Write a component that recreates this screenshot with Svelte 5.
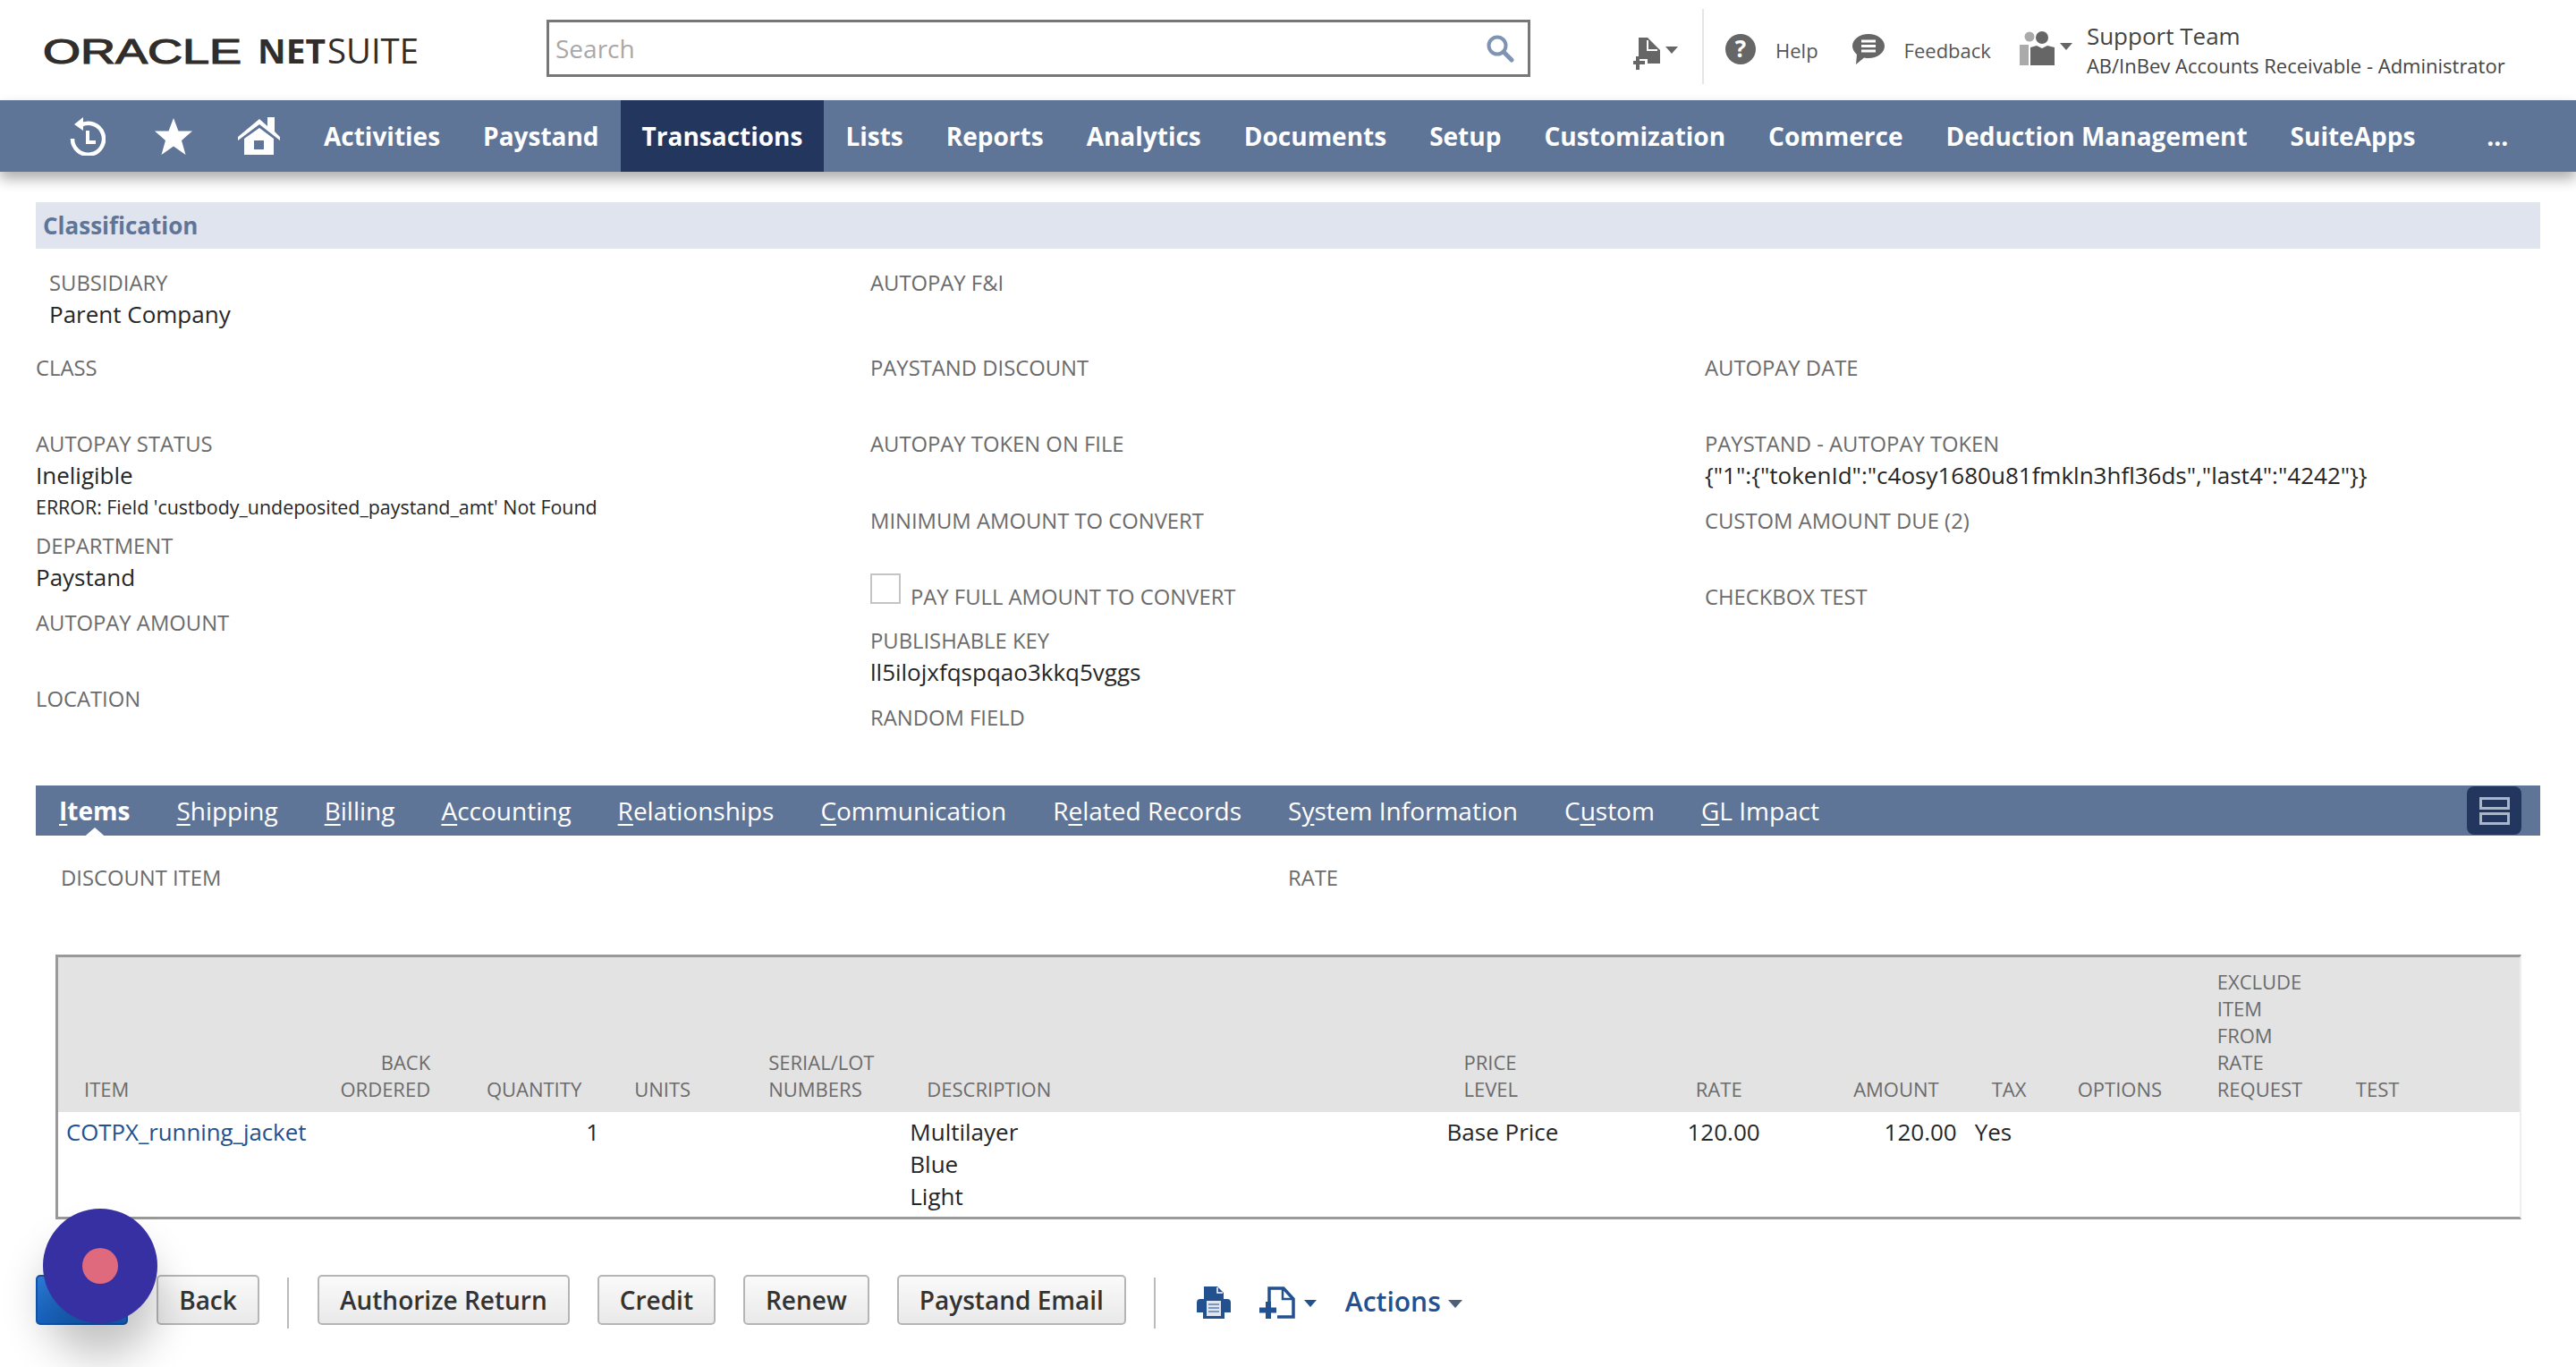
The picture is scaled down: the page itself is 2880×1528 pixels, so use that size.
<script>
  const navItems = ['Activities', 'Paystand', 'Transactions', 'Lists', 'Reports', 'Analytics', 'Documents', 'Setup', 'Customization', 'Commerce', 'Deduction Management', 'SuiteApps'];
  const tabs = [
    ['', 'I', 'tems'], ['', 'S', 'hipping'], ['', 'B', 'illing'], ['', 'A', 'ccounting'], ['', 'R', 'elationships'],
    ['', 'C', 'ommunication'], ['R', 'e', 'lated Records'], ['S', 'y', 'stem Information'], ['C', 'u', 'stom'], ['', 'G', 'L Impact']
  ];
  const cols = [
    { w: 288, lines: ['ITEM'], cell: 'COTPX_running_jacket', kind: 'link' },
    { w: 158, lines: ['BACK', 'ORDERED'], right: true },
    { w: 169, lines: ['QUANTITY'], right: true, cell: '1' },
    { w: 150, lines: ['UNITS'] },
    { w: 177, lines: ['SERIAL/LOT', 'NUMBERS'] },
    { w: 600, lines: ['DESCRIPTION'], cellLines: ['Multilayer', 'Blue', 'Light'] },
    { w: 150, lines: ['PRICE', 'LEVEL'], cell: 'Base Price' },
    { w: 220, lines: ['RATE'], right: true, cell: '120.00' },
    { w: 220, lines: ['AMOUNT'], right: true, cell: '120.00' },
    { w: 96, lines: ['TAX'], cell: 'Yes' },
    { w: 156, lines: ['OPTIONS'] },
    { w: 155, lines: ['EXCLUDE', 'ITEM', 'FROM', 'RATE', 'REQUEST'] },
    { w: 212, lines: ['TEST'] }
  ];
</script>

<div class="page">
  <header class="top">
    <div class="logo" aria-label="Oracle NetSuite">
      <svg width="420" height="30" viewBox="0 0 420 30">
        <text class="lg-oracle" x="0" y="28" textLength="222" lengthAdjust="spacingAndGlyphs">ORACLE</text>
        <text class="lg-net" x="240" y="28" textLength="76" lengthAdjust="spacingAndGlyphs">NET</text>
        <text class="lg-suite" x="318" y="28" textLength="102" lengthAdjust="spacingAndGlyphs">SUITE</text>
      </svg>
    </div>
    <div class="search">
      <span>Search</span>
      <svg width="32" height="32" viewBox="0 0 32 32"><circle cx="13" cy="13" r="9.500" fill="none" stroke="#7f93b2" stroke-width="4"/><path d="M20 20l9 9" stroke="#7f93b2" stroke-width="5" stroke-linecap="round"/></svg>
    </div>
    <div class="tools">
      <div class="shortcut">
        <svg width="32" height="36" viewBox="0 0 32 36"><path d="M6 0h10l14 14v15H16v-5H6z" fill="#666"/><path d="M16 3v11h11" fill="none" stroke="#fff" stroke-width="2"/><path d="M5 21v15M0 28h13" stroke="#666" stroke-width="4" /></svg>
        <i class="caret gray"></i>
      </div>
      <div class="vline"></div>
      <svg class="help-ic" width="34" height="34" viewBox="0 0 34 34"><ellipse cx="17" cy="17" rx="17" ry="17" fill="#666"/><text x="17" y="26" text-anchor="middle" class="qm">?</text></svg>
      <span class="tool-txt help">Help</span>
      <svg class="fb-ic" width="36" height="34" viewBox="0 0 36 34"><path d="M18 0c10 0 18 6 18 13.500S28 27 18 27c-2 0-3 0-5 -.5L4 34l1-11C2 20 0 17 0 13.500 0 6 8 0 18 0z" fill="#666"/><path d="M10 8h16M10 13.500h16M10 19h16" stroke="#fff" stroke-width="3"/></svg>
      <span class="tool-txt fb">Feedback</span>
      <svg class="users" width="42" height="38" viewBox="0 0 42 38"><circle cx="11" cy="6" r="5.500" fill="#aaa"/><path d="M0 15h10v23H0z" fill="#aaa"/><circle cx="25" cy="7" r="7" fill="#666"/><path d="M12 18l7-2 6 3 6-3 8 2v20H12z" fill="#666"/></svg>
      <i class="caret gray uc"></i>
      <div class="who">
        <div class="who-a">Support Team</div>
        <div class="who-b">AB/InBev Accounts Receivable - Administrator</div>
      </div>
    </div>
  </header>

  <nav class="nav">
    <svg class="ic-clock" width="40" height="43" viewBox="0 0 40 43"><path d="M12 9A17.500 17.500 0 1 1 3 24" fill="none" stroke="#fff" stroke-width="4.500"/><path d="M5 8l10-8v15z" fill="#fff"/><path d="M20 15v13h9" fill="none" stroke="#fff" stroke-width="4"/></svg>
    <svg class="ic-star" width="42" height="41" viewBox="0 0 42 41"><path d="M21 0l5.500 14.500H42L30 25l4.500 16L21 31.500 7.500 41 12 25 0 14.500h15.500z" fill="#fff"/></svg>
    <svg class="ic-home" width="47" height="42" viewBox="0 0 47 42"><path d="M0 22L24 2l9 8V0h8v16l6 6v4L24 8 0 26z" fill="#fff"/><path d="M7 42V24L24 12l16 12v18z" fill="#fff"/><path d="M18 26h11v10H18z" fill="#5f7598"/></svg>
    {#each navItems as item}
      <a class="nav-item" class:active={item === 'Transactions'} href="#top">{item}</a>
    {/each}
    <a class="nav-item more" href="#top">...</a>
  </nav>

  <main class="main">
    <div class="band">Classification</div>
    <div class="fields">
      <div class="col">
        <div class="f first inset"><div class="l">SUBSIDIARY</div><div class="v">Parent Company</div></div>
        <div class="f"><div class="l">CLASS</div></div>
        <div class="f err-f">
          <div class="l">AUTOPAY STATUS</div><div class="v">Ineligible</div>
          <div class="err">ERROR: Field 'custbody_undeposited_paystand_amt' Not Found</div>
        </div>
        <div class="f tall"><div class="l">DEPARTMENT</div><div class="v">Paystand</div></div>
        <div class="f"><div class="l">AUTOPAY AMOUNT</div></div>
        <div class="f end"><div class="l">LOCATION</div></div>
      </div>
      <div class="col">
        <div class="f first"><div class="l">AUTOPAY F&amp;I</div></div>
        <div class="f"><div class="l">PAYSTAND DISCOUNT</div></div>
        <div class="f tall"><div class="l">AUTOPAY TOKEN ON FILE</div></div>
        <div class="f short"><div class="l">MINIMUM AMOUNT TO CONVERT</div></div>
        <div class="f check"><span class="box"></span><div class="l">PAY FULL AMOUNT TO CONVERT</div></div>
        <div class="f tall"><div class="l">PUBLISHABLE KEY</div><div class="v">ll5ilojxfqspqao3kkq5vggs</div></div>
        <div class="f end"><div class="l">RANDOM FIELD</div></div>
      </div>
      <div class="col">
        <div class="f first"></div>
        <div class="f"><div class="l">AUTOPAY DATE</div></div>
        <div class="f tall"><div class="l">PAYSTAND - AUTOPAY TOKEN</div><div class="v">{'{"1":{"tokenId":"c4osy1680u81fmkln3hfl36ds","last4":"4242"}}'}</div></div>
        <div class="f"><div class="l">CUSTOM AMOUNT DUE (2)</div></div>
        <div class="f end"><div class="l">CHECKBOX TEST</div></div>
      </div>
    </div>

    <div class="tabs">
      {#each tabs as t, i}
        <span class="tab" class:on={i === 0}>{t[0]}<u>{t[1]}</u>{t[2]}</span>
      {/each}
      <button class="collapse" aria-label="Collapse">
        <svg width="34" height="31" viewBox="0 0 34 31"><path d="M1.500 1.500h31v11h-31zM1.500 18.500h31v11h-31z" fill="none" stroke="#a9b5c8" stroke-width="3"/></svg>
      </button>
    </div>

    <div class="disc">
      <div class="l">DISCOUNT ITEM</div>
      <div class="l">RATE</div>
    </div>

    <div class="tbl">
      <table>
        <colgroup>
          {#each cols as c}<col style="width:{c.w}px" />{/each}
        </colgroup>
        <thead>
          <tr>
            {#each cols as c}
              <th class:r={c.right}>{#each c.lines as ln}<div>{ln}</div>{/each}</th>
            {/each}
          </tr>
        </thead>
        <tbody>
          <tr>
            {#each cols as c}
              <td class:r={c.right} class:link={c.kind === 'link'}>
                {#if c.cellLines}{#each c.cellLines as ln}<div>{ln}</div>{/each}{:else}{c.cell ?? ''}{/if}
              </td>
            {/each}
          </tr>
        </tbody>
      </table>
    </div>

    <div class="actions">
      <button class="btn primary" aria-label="Save"></button>
      <button class="btn back">Back</button>
      <span class="sep"></span>
      <button class="btn">Authorize Return</button>
      <button class="btn">Credit</button>
      <button class="btn">Renew</button>
      <button class="btn">Paystand Email</button>
      <span class="sep sep2"></span>
      <svg class="print" width="38" height="36" viewBox="0 0 38 36"><path d="M8 0h15l7 7v7h4a4 4 0 0 1 4 4v11h-7v7H7v-7H0V18a4 4 0 0 1 4-4h4z" fill="#23508f"/><path d="M23 1v6h6" fill="none" stroke="#fff" stroke-width="1.500"/><path d="M11 16h16v17H11z" fill="#dfe6f0"/><path d="M13 20h12M13 24h12M13 28h12" stroke="#7d97bd" stroke-width="2"/></svg>
      <svg class="newdoc" width="40" height="36" viewBox="0 0 40 36"><path d="M11 18V2h16l11 12v20H20" fill="none" stroke="#23508f" stroke-width="3.500"/><path d="M26 2v12h12" fill="none" stroke="#23508f" stroke-width="2.500"/><path d="M10 17v19M0 26.500h19" stroke="#23508f" stroke-width="6"/></svg>
      <i class="caret blue"></i>
      <span class="act">Actions</span>
      <i class="caret slate"></i>
    </div>
  </main>

  <div class="fab"><span></span></div>
</div>

<style>
  :global(body) { margin: 0; background: #fff; }
  .page { position: relative; width: 2880px; height: 1528px; overflow: hidden; font-family: "Open Sans", "Liberation Sans", sans-serif; color: #262626; }

  .top { display: flex; align-items: center; height: 112px; box-sizing: border-box; padding: 0 0 4px 48px; }
  .logo { width: 563px; flex: none; display: flex; align-items: center; margin-top: 7px; }
  .logo svg { display: block; overflow: visible; }
  .lg-oracle { font: 400 38px "Liberation Sans", sans-serif; fill: #312d2a; stroke: #312d2a; stroke-width: 1.200px; }
  .lg-net { font: 700 38px "Open Sans", sans-serif; fill: #312d2a; }
  .lg-suite { font: 400 38px "Open Sans", sans-serif; fill: #312d2a; }
  .search { width: 1100px; height: 64px; box-sizing: border-box; border: 3px solid #777; display: flex; align-items: center; justify-content: space-between; padding: 0 15px 0 7px; flex: none; font-size: 28px; color: #a8a8a8; }
  .tools { display: flex; align-items: center; margin: 0 0 4px 115px; height: 84px; }
  .shortcut { display: flex; align-items: flex-start; width: 50px; margin-top: 16px; }
  .caret { display: block; width: 0; height: 0; border-left: 7px solid transparent; border-right: 7px solid transparent; border-top: 8px solid #666; flex: none; }
  .shortcut .caret { margin: 10px 0 0 4px; }
  .vline { width: 2px; height: 84px; background: #e6e6e6; margin: 0 24px 0 27px; }
  .tool-txt { font-size: 22px; color: #555; font-weight: 400; margin-top: 8px; }
  .help-ic { margin-top: 6px; }
  .help { margin-left: 22px; }
  .fb-ic { margin: 6px 0 0 38px; }
  .fb { margin-left: 22px; }
  .users { margin: 4px 0 0 32px; }
  .uc { margin: 0 16px 0 3px; }
  .qm { font: 700 26px "Open Sans", sans-serif; fill: #fff; }
  .who { margin-top: 5px; }
  .who-a { font-size: 26px; line-height: 36px; color: #444; }
  .who-b { font-size: 22px; line-height: 30px; color: #444; }

  .nav { display: flex; align-items: center; height: 80px; background: #5f7598; box-shadow: 0 8px 14px 0 rgba(0,0,0,.32); position: relative; padding-left: 78px; }
  .ic-clock { flex: none; }
  .ic-star { flex: none; margin-left: 55px; }
  .ic-home { flex: none; margin-left: 51px; margin-right: 25px; }
  .nav-item { display: flex; align-items: center; height: 80px; padding: 0 24px; font-size: 28px; font-weight: 700; color: #fff; text-decoration: none; }
  .nav-item.active { background: #23375e; }
  .more { margin-left: 32px; }

  .main { padding: 34px 40px 0; }
  .band { height: 52px; line-height: 52px; background: #dfe4ee; color: #5f7598; font-size: 26px; font-weight: 700; padding-left: 8px; }
  .fields { display: grid; grid-template-columns: 933px 933px 934px; padding-top: 21px; }
  .f { height: 85px; }
  .first { height: 95px; }
  .tall { height: 86px; }
  .short { height: 75px; }
  .end { height: 34px; }
  .inset { padding-left: 15px; }
  .err-f { height: 114px; }
  .l { font-size: 23.800px; line-height: 34px; color: #6b6b6b; }
  .v { font-size: 26px; line-height: 36px; color: #262626; }
  .err { font-size: 21.400px; line-height: 36px; color: #262626; }
  .check { height: 59px; display: flex; align-items: flex-end; gap: 11px; box-sizing: border-box; padding-bottom: 15px; }
  .box { width: 34px; height: 34px; box-sizing: border-box; border: 2px solid #c4c4c4; margin-bottom: 9px; flex: none; }

  .tabs { display: flex; align-items: center; height: 56px; background: #5f7598; margin-top: 59px; position: relative; font-size: 28px; color: #fff; }
  .tab { padding: 0 26px; position: relative; font-weight: 400; }
  .tab u { text-underline-offset: 4px; }
  .tab.on { font-weight: 700; }
  .tab.on::after { content: ""; position: absolute; left: 50%; bottom: -14px; margin-left: -16px; border-left: 16px solid transparent; border-right: 16px solid transparent; border-bottom: 14px solid #fff; }
  .collapse { position: absolute; right: 21px; top: 1px; width: 61px; height: 54px; border: 0; padding: 0; background: #23375e; border-radius: 8px; display: flex; align-items: center; justify-content: center; }

  .disc { display: grid; grid-template-columns: 1372px 1fr; height: 132px; padding: 30px 0 0 28px; box-sizing: border-box; }

  .tbl { margin: 1px 0 0 22px; width: 2757px; box-sizing: border-box; border: 3px solid #999; border-right: 2px solid #eee; }
  table { border-collapse: collapse; table-layout: fixed; width: 2752px; }
  th { background: #e3e3e3; font-weight: 400; font-size: 22px; line-height: 30px; color: #6b6b6b; text-align: left; vertical-align: bottom; padding: 12px 2px 11px 29px; white-space: nowrap; }
  th.r { text-align: right; padding: 12px 30px 11px 0; }
  td { font-size: 26px; line-height: 36px; vertical-align: top; text-align: left; padding: 4px 2px 5px 10px; white-space: nowrap; color: #262626; }
  td.r { text-align: right; padding: 4px 10px 5px 0; }
  td.link { color: #23508f; padding-left: 9px; font-size: 25.800px; }

  .actions { display: flex; align-items: center; height: 56px; margin-top: 62px; }
  .btn { height: 56px; box-sizing: border-box; border: 2px solid #b5b5b5; border-radius: 5px; background: linear-gradient(#fafafa, #e9e9e9); font: 600 28px "Open Sans", sans-serif; color: #333; padding: 0 23px; margin-right: 31px; flex: none; }
  .btn.primary { width: 103px; margin-right: 32px; background: linear-gradient(#2f83e6, #1767c9); border-color: #1558ad; color: #fff; padding: 0; }
  .btn.back { width: 115px; margin-right: 0; padding: 0; }
  .sep { width: 2px; height: 57px; background: #bbb; margin: 6px 32px 0 31px; flex: none; }
  .sep2 { margin: 6px 46px 0 0; }
  .print { flex: none; margin-top: 5px; }
  .newdoc { flex: none; margin: 5px 0 0 32px; }
  .caret.blue { border-top-color: #23508f; margin: 8px 0 0 10px; }
  .act { font-size: 30px; font-weight: 600; color: #23508f; margin: 2px 0 0 32px; }
  .caret.slate { border-top-color: #4e5f7a; margin: 8px 0 0 8px; border-left-width: 8px; border-right-width: 8px; border-top-width: 9px; }

  .fab { position: absolute; left: 48px; top: 1351px; width: 128px; height: 128px; border-radius: 50%; background: #3730a3; box-shadow: 0 38px 48px rgba(0,0,0,.24); display: flex; align-items: center; justify-content: center; }
  .fab span { width: 40px; height: 40px; border-radius: 50%; background: #e06a7d; }
</style>
